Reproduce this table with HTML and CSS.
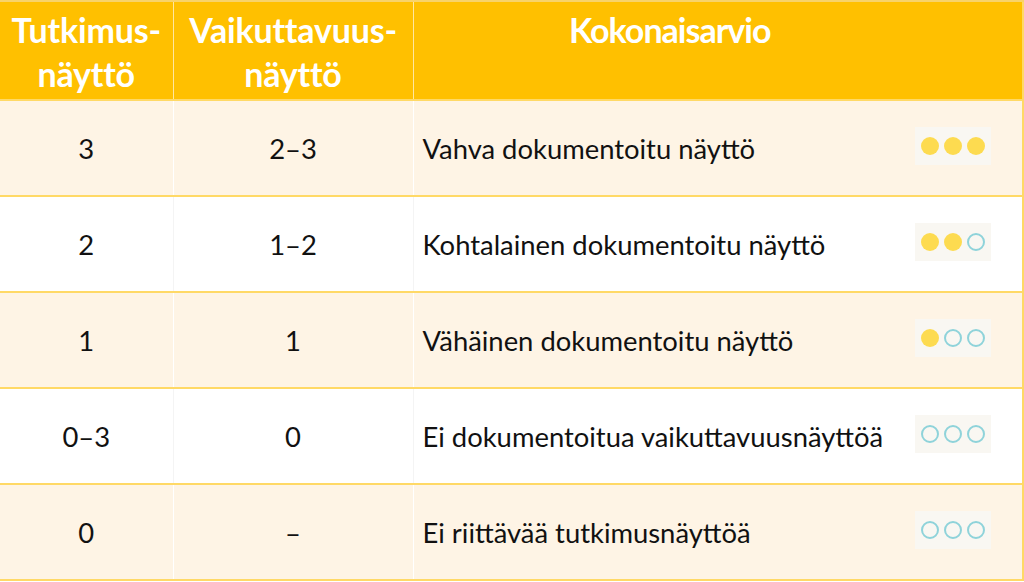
FILE: index.html
```html
<!DOCTYPE html>
<html lang="fi">
<head>
<meta charset="utf-8">
<title>Näytön aste</title>
<link rel="stylesheet" href="styles.css">
</head>
<body>
<table class="evidence">
  <colgroup>
    <col class="c1">
    <col class="c2">
    <col class="c3">
  </colgroup>
  <thead>
    <tr>
      <th class="hd">Tutkimus-<br>näyttö</th>
      <th class="hd">Vaikuttavuus-<br>näyttö</th>
      <th class="hd hd-main">Kokonaisarvio</th>
    </tr>
  </thead>
  <tbody>
    <tr class="alt">
      <td class="num">3</td>
      <td class="num">2–3</td>
      <td class="desc"><div class="desc-row"><span>Vahva dokumentoitu näyttö</span><span class="dots"><i class="dot full"></i><i class="dot full"></i><i class="dot full"></i></span></div></td>
    </tr>
    <tr>
      <td class="num">2</td>
      <td class="num">1–2</td>
      <td class="desc"><div class="desc-row"><span>Kohtalainen dokumentoitu näyttö</span><span class="dots"><i class="dot full"></i><i class="dot full"></i><i class="dot empty"></i></span></div></td>
    </tr>
    <tr class="alt">
      <td class="num">1</td>
      <td class="num">1</td>
      <td class="desc"><div class="desc-row"><span>Vähäinen dokumentoitu näyttö</span><span class="dots"><i class="dot full"></i><i class="dot empty"></i><i class="dot empty"></i></span></div></td>
    </tr>
    <tr>
      <td class="num">0–3</td>
      <td class="num">0</td>
      <td class="desc"><div class="desc-row"><span>Ei dokumentoitua vaikuttavuusnäyttöä</span><span class="dots"><i class="dot empty"></i><i class="dot empty"></i><i class="dot empty"></i></span></div></td>
    </tr>
    <tr class="alt">
      <td class="num">0</td>
      <td class="num">–</td>
      <td class="desc"><div class="desc-row"><span>Ei riittävää tutkimusnäyttöä</span><span class="dots"><i class="dot empty"></i><i class="dot empty"></i><i class="dot empty"></i></span></div></td>
    </tr>
  </tbody>
</table>
</body>
</html>
```

FILE: styles.css
```css
html, body {
  margin: 0;
  padding: 0;
  background: #ffffff;
}
body {
  font-family: Lato, "Liberation Sans", sans-serif;
  width: 1024px;
  height: 582px;
  overflow: hidden;
}
.evidence {
  width: 1024px;
  border-collapse: collapse;
  table-layout: fixed;
  border-right: 2px solid #ffd966;
}
.c1 { width: 173px; }
.c2 { width: 240px; }
.c3 { width: auto; }

.hd {
  background: #ffc000;
  color: #ffffff;
  font-weight: 700;
  font-size: 34px;
  line-height: 44px;
  height: 99px;
  padding: 6px 0 0;
  box-sizing: border-box;
  vertical-align: top;
  text-align: center;
  white-space: nowrap;
  border-top: 2px solid #f8d36a;
  border-bottom: 2px solid #ffd966;
  border-left: 1px solid #ffe7a0;
  letter-spacing: -0.2px;
}
.hd:first-child { border-left: none; }
.hd-main { padding-right: 96px; letter-spacing: -1px; }

tbody td {
  height: 94px;
  padding: 0;
  border-bottom: 2px solid #ffd966;
  border-left: 1px solid #f4f4f4;
  font-size: 27.4px;
  color: #111111;
  vertical-align: middle;
  background: #ffffff;
}
tbody td:first-child { border-left: none; }
tbody tr.alt td { background: #fef4e5; border-left-color: #ffffff; }
tbody tr.alt td:first-child { border-left: none; }

.num { text-align: center; }
.desc { padding-left: 9px; }
.desc-row {
  display: flex;
  align-items: center;
  justify-content: space-between;
  padding-right: 31px;
}
.dots {
  display: flex;
  gap: 5px;
  padding: 10px 6px;
  background: #f9f7f2;
  margin-top: -5px;
}
.dot {
  display: block;
  width: 18px;
  height: 18px;
  border-radius: 50%;
  box-sizing: border-box;
}
.dot.full { background: #fddb50; }
.dot.empty { border: 2.5px solid #8fd3da; }
```
